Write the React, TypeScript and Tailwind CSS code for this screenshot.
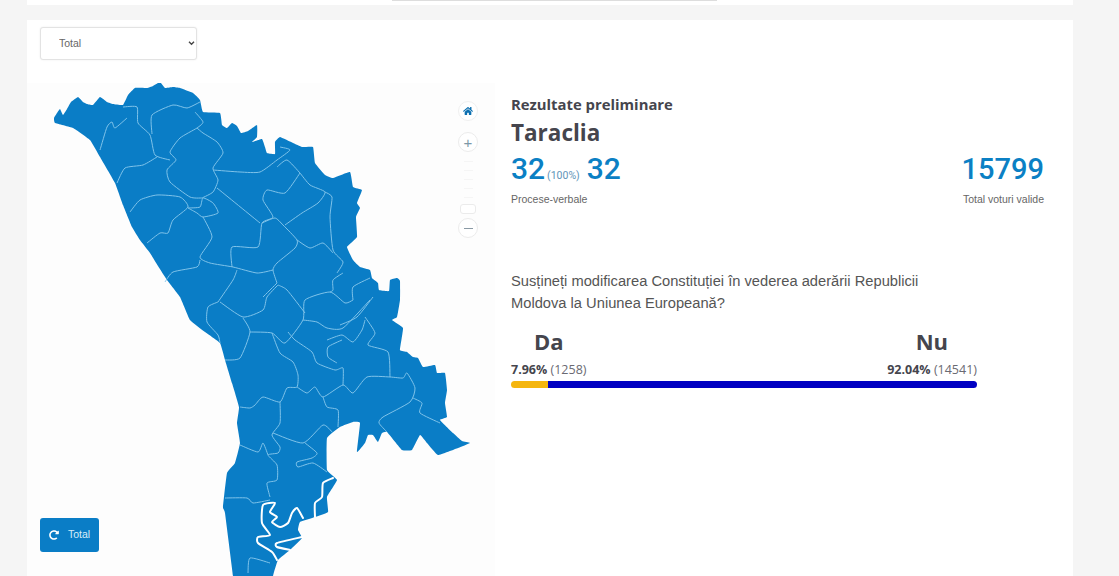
import { FaHome, FaRedoAlt } from "react-icons/fa";

const outline =
  "54,118 57,113 60,109 63,115 67,109 71,102 78,97 83,102 87,104 93,105 100,97 107,102 113,104 123,105 128,95 135,88 147,88 153,86 160,82 165,88 173,87 180,88 193,93 200,100 203,112 220,113 222,125 227,128 232,123 237,126 241,133 248,131 257,125 257,137 252,142 262,139 265,147 267,153 275,154 275,142 280,137 293,143 302,147 313,147 315,163 325,175 333,178 350,172 353,187 362,190 357,203 360,208 356,217 357,237 347,247 353,260 360,267 370,270 372,278 378,283 379,290 389,291 390,280 397,278 400,281 400,300 397,317 392,320 403,328 400,350 407,352 413,357 418,358 423,367 435,365 437,373 445,373 447,390 445,403 447,417 440,420 453,433 462,441 470,443 458,448 438,455 427,443 420,435 412,450 402,450 387,432 382,433 378,442 373,435 368,435 365,443 357,452 360,423 353,422 340,427 327,438 327,470 337,480 327,497 328,512 315,517 300,522 298,530 302,538 290,550 278,560 273,576 273,590 233,590 233,576 225,513 223,507 227,473 235,463 240,443 237,423 239,407 232,383 225,360 220,343 205,332 190,320 180,297 167,280 158,266 150,253 140,240 132,227 123,205 115,183 100,157 90,140 73,128 55,123";

const borders = [
  "123,107 137,107 138,123 150,135 155,155 170,160",
  "152,134 152,115 173,105 187,108 200,102",
  "195,112 203,122 197,128 180,138 170,152 176,160 167,170 170,182 190,197 202,198",
  "197,128 203,133 217,142 223,153 213,168 218,180 213,192 202,198",
  "100,150 107,127 112,122 115,128 127,118",
  "157,157 143,165 125,168 117,183",
  "213,170 240,172 260,172 277,160 290,150 280,147",
  "277,167 287,160 300,173",
  "300,173 285,193 267,190 263,200 273,217 262,223 258,247 232,247 232,267",
  "217,188 260,223",
  "262,223 275,218 283,225 297,240 295,248 277,263 273,270 277,283",
  "300,173 310,185 325,192 318,203 302,213 285,225",
  "325,192 332,197 330,217 333,250 343,262 337,273",
  "297,240 310,248 323,243 333,253",
  "130,212 140,200 157,195 180,197 188,207 173,220 168,233 160,233 147,243",
  "188,208 200,207 203,198 213,203 218,213 203,217 197,213 188,208",
  "203,217 212,237 200,257 210,263 233,267 257,273 273,270",
  "200,260 197,267 173,272 165,282",
  "237,270 233,280 218,302",
  "277,283 263,297",
  "343,273 333,280 333,290 330,292",
  "370,278 353,287 353,300",
  "218,302 208,307 207,322 218,335 220,343",
  "220,302 243,317 263,310 267,297 278,285",
  "243,318 250,332 240,358 225,360",
  "250,332 272,333 285,343 303,320 305,300 330,292 345,303 353,300",
  "278,285 287,290 305,313",
  "303,320 317,322 327,328 343,328 370,300",
  "373,297 357,317 340,325",
  "288,332 295,340 312,352 317,363 335,370 343,368 343,385",
  "272,333 280,353 293,362 298,375 297,387 287,388 280,402 263,397 255,405 250,408 240,407",
  "297,387 307,393 315,387 323,397 343,385 353,393 367,377 390,377 403,378 407,373 415,388 410,402 383,417 379,423 387,432",
  "323,397 327,407 338,410 338,427",
  "390,377 388,352 368,345 375,333 365,317",
  "327,340 342,335 353,342 362,330 365,320",
  "342,340 328,347 328,357 337,363",
  "413,398 422,403 420,413 440,423",
  "280,402 280,423 272,435 280,447 278,453 268,455 277,465 277,480 267,483 270,497",
  "273,433 303,443 323,425 333,433",
  "305,443 317,453 312,458 297,462 298,467 313,463 327,472",
  "240,445 258,452 263,443 268,455",
  "225,498 247,498 253,503 270,500",
  "248,573 250,558 270,563",
];

const taraclia = [
  "333,478 323,483 322,497 315,503 315,517",
  "303,518 297,508 292,513 288,523 280,527 272,522 277,517 270,512 275,503 263,505 262,523 270,535 258,537 258,543 272,552 277,560",
  "302,537 277,543 277,547 290,550",
];

// catmull-rom so the district lines don't look like straight segments
function smooth(points: string, closed = false, k = 0.1) {
  const p = points.split(" ").map((s) => s.split(",").map(Number));
  const at = (i: number) =>
    closed ? p[(i + p.length) % p.length] : p[Math.max(0, Math.min(p.length - 1, i))];
  let d = `M${p[0][0]} ${p[0][1]}`;
  const n = closed ? p.length : p.length - 1;
  for (let i = 0; i < n; i++) {
    const [a, b, c, e] = [at(i - 1), at(i), at(i + 1), at(i + 2)];
    d += `C${b[0] + (c[0] - a[0]) * k} ${b[1] + (c[1] - a[1]) * k} ${c[0] - (e[0] - b[0]) * k} ${c[1] - (e[1] - b[1]) * k} ${c[0]} ${c[1]}`;
  }
  return d + (closed ? "Z" : "");
}

function MapControls() {
  return (
    <div className="absolute left-[431px] top-[18px] flex w-5 flex-col items-center">
      <span className="grid h-5 w-5 place-items-center rounded-full border border-[#f0f0f0] bg-white text-[#0b6fb0]">
        <FaHome className="h-[10px] w-[10px]" />
      </span>
      <span className="mt-[11px] grid h-5 w-5 place-items-center rounded-full border border-[#ececec] bg-white font-['Liberation_Sans',sans-serif] text-[15px] leading-none text-[#7d98a8]">
        +
      </span>
      <div className="mt-[9px] flex w-full flex-col items-center gap-[8px]">
        {[0, 1, 2, 3, 4].map((i) => (
          <span key={i} className="h-px w-[9px] bg-[#f5f5f5]" />
        ))}
      </div>
      <span className="mt-[6px] h-[10px] w-[16px] rounded-[3px] border border-[#ebebeb] bg-white" />
      <span className="mt-[4px] grid h-5 w-5 place-items-center rounded-full border border-[#ececec] bg-white">
        <span className="h-px w-[9px] bg-[#8a9aa5]" />
      </span>
    </div>
  );
}

export default function App() {
  return (
    <div className="flex h-[576px] flex-col overflow-hidden bg-[#f5f5f5] pl-[27px] pr-[46px] font-['Liberation_Sans',sans-serif]">
      <div className="flex h-[5px] shrink-0 justify-center bg-white">
        <div className="ml-[8px] h-px w-[325px] bg-[#dddddd]" />
      </div>
      <div className="mt-[15px] flex-1 bg-white">
        <div className="px-[13px] pt-[7px]">
          <div className="relative w-[157px]">
            <select className="h-[33px] w-full appearance-none rounded-[3px] border border-[#e3e3e3] bg-white pl-[18px] text-[10.5px] text-[#666666] shadow-[0_0_2px_rgba(0,0,0,0.08)]">
              <option>Total</option>
            </select>
            <svg viewBox="0 0 8 6" className="absolute right-[2px] top-[14px] h-[5px] w-[7px]">
              <path d="M1 1l3 3 3-3" fill="none" stroke="#444444" strokeWidth="1.6" />
            </svg>
          </div>
        </div>
        <div className="mt-[23px] flex">
          <div className="relative h-[493px] w-[468px] shrink-0 bg-[#fdfdfd]">
            <svg viewBox="27 83 468 493" className="h-[493px] w-[468px]">
              <path d={smooth(outline, true, 0.05)} fill="#0a7dc6" />
              {borders.map((b, i) => (
                <path key={i} d={smooth(b)} fill="none" stroke="#7fc3ea" strokeWidth="1" strokeLinejoin="round" />
              ))}
              {taraclia.map((b, i) => (
                <path key={i} d={smooth(b)} fill="none" stroke="#ffffff" strokeWidth="2" strokeLinecap="round" strokeLinejoin="round" />
              ))}
            </svg>
            <MapControls />
            <button className="absolute bottom-[24px] left-[13px] flex h-[34px] w-[59px] items-center gap-[9px] rounded-[3px] bg-[#0a7dc6] pl-[9px] text-[10.5px] text-[#d8edf9]">
              <FaRedoAlt className="h-[10px] w-[10px] text-white" />
              Total
            </button>
          </div>
          <div className="w-[549px] pl-[16px]">
            <div className="mt-[11px] font-['Open_Sans',sans-serif] text-[14.85px] font-bold leading-5 text-[#45454d]">
              Rezultate preliminare
            </div>
            <div className="mt-[3px] font-['Open_Sans',sans-serif] text-[22.5px] font-bold leading-8 text-[#45454d]">
              Taraclia
            </div>
            <div className="mt-[4px] flex items-start justify-between">
              <div>
                <div className="flex items-baseline font-['Roboto',sans-serif] text-[30px] font-medium leading-8 text-[#0b80c4]">
                  32
                  <span className="ml-[2px] mr-[7px] text-[10.5px] font-normal text-[#5e94b8]">(100%)</span>
                  32
                </div>
                <div className="-mt-px text-[10.5px] leading-4 text-[#666666]">Procese-verbale</div>
              </div>
              <div className="text-right">
                <div className="font-['Roboto',sans-serif] text-[29px] font-medium leading-8 text-[#0b80c4]">15799</div>
                <div className="mt-[6px] text-[10.5px] leading-4 text-[#666666]">Total voturi valide</div>
              </div>
            </div>
            <p className="mt-[63px] w-[440px] text-[14.7px] leading-[22px] text-[#555555]">
              Susțineți modificarea Constituției în vederea aderării Republicii Moldova la Uniunea Europeană?
            </p>
            <div className="mt-[11px] w-[466px]">
              <div className="flex justify-between pl-[23px] pr-[29px] font-['Open_Sans',sans-serif] text-[22px] font-bold leading-8 text-[#45454d]">
                <span>Da</span>
                <span>Nu</span>
              </div>
              <div className="mt-[5px] flex justify-between font-['Open_Sans',sans-serif] text-[12.5px] leading-4 text-[#6a6a72]">
                <span>
                  <b className="text-[#45454d]">7.96%</b> (1258)
                </span>
                <span>
                  <b className="text-[#45454d]">92.04%</b> (14541)
                </span>
              </div>
              <div className="mt-[3px] flex h-[7px] overflow-hidden rounded-full">
                <div className="w-[7.96%] bg-[#f5b60f]" />
                <div className="flex-1 bg-[#0000c2]" />
              </div>
            </div>
          </div>
        </div>
      </div>
    </div>
  );
}
